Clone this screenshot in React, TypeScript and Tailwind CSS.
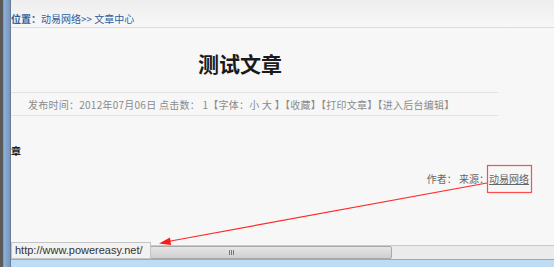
import React from "react";

export default function App() {
  const cjk = { fontFamily: '"Noto Sans CJK SC", "Liberation Sans", sans-serif' };
  return (
    <div className="relative w-[554px] h-[267px] overflow-hidden bg-[#f7f7f7] flex" style={cjk}>
      {/* left window frame */}
      <div className="flex h-full shrink-0">
        <div className="w-[3px] h-full bg-[#5b5b5b]" />
        <div className="w-[1px] h-full bg-[#9a9a9a]" />
        <div className="w-[6px] h-full bg-gradient-to-r from-[#8eb0d8] to-[#7497c2]" />
        <div className="w-[1px] h-full bg-[#6a7d92]" />
      </div>
      {/* main */}
      <div className="flex-1 flex flex-col min-w-0">
        <div className="h-[28px] bg-gradient-to-b from-[#eeeeee] to-[#f7f7f7] border-b border-[#d5e0ec] flex items-end pb-[3px] text-[10px] leading-none text-[#2f5e9e]">
          <span className="font-bold">位置：</span>
          <span>动易网络&gt;&gt; 文章中心</span>
        </div>
        <div className="h-[25px]" />
        <div className="pl-[187px] text-[21px] font-bold leading-none text-[#1a1a1a]">测试文章</div>
        <div className="h-[18px]" />
        <div className="w-[487px] border-t border-b border-[#e2e2e2] h-[24px] flex items-center pl-[17px] text-[10px] tracking-[0.25px] text-[#8a8a8a] whitespace-nowrap">
          发布时间：2012年07月06日 点击数： 1【字体：小 大 】【收藏】【打印文章】【进入后台编辑】
        </div>
        <div className="h-[30px]" />
        <div className="text-[10px] font-bold leading-none text-[#222]">章</div>
        <div className="h-[18px]" />
        <div className="w-[518px] flex justify-end text-[10px] leading-none text-[#666]">
          <span>作者： 来源：</span>
          <span className="underline">动易网络</span>
        </div>
        <div className="flex-1" />
        {/* scrollbar */}
        <div className="h-[14px] flex border-t border-[#c9c9c9] bg-[#ebebeb]">
          <div className="w-[139px]" />
          <div className="w-[242px] bg-gradient-to-b from-[#e6e6e6] to-[#cfcfcf] border border-[#a9a9a9] rounded-[2px] flex items-center justify-center">
            <div className="flex gap-[1px] ml-[-80px]">
              <div className="w-[1px] h-[5px] bg-[#777]" />
              <div className="w-[1px] h-[5px] bg-[#777]" />
              <div className="w-[1px] h-[5px] bg-[#777]" />
            </div>
          </div>
        </div>
        <div className="h-[1px] bg-[#9fa8b3]" />
        <div className="h-[7px] bg-[#bfdcf5]" />
      </div>

      {/* status tooltip */}
      <div className="absolute left-[11px] top-[242px] w-[140px] h-[17px] bg-[#f2f2f2] border border-[#c4c4c4] flex items-center pl-[3px] text-[11px] text-[#333]" style={{ fontFamily: '"Liberation Sans", Arial, sans-serif' }}>
        http://www.powereasy.net/
      </div>

      {/* annotation */}
      <svg className="absolute left-0 top-0" width="554" height="267">
        <rect x="487.5" y="165.5" width="44" height="27" fill="none" stroke="#ff4d4d" strokeWidth="1.2" />
        <line x1="487" y1="183" x2="168" y2="241.5" stroke="#ff2a2a" strokeWidth="1.2" />
        <polygon points="159,243.5 170,237.5 171,245" fill="#ff1a1a" />
      </svg>
    </div>
  );
}
